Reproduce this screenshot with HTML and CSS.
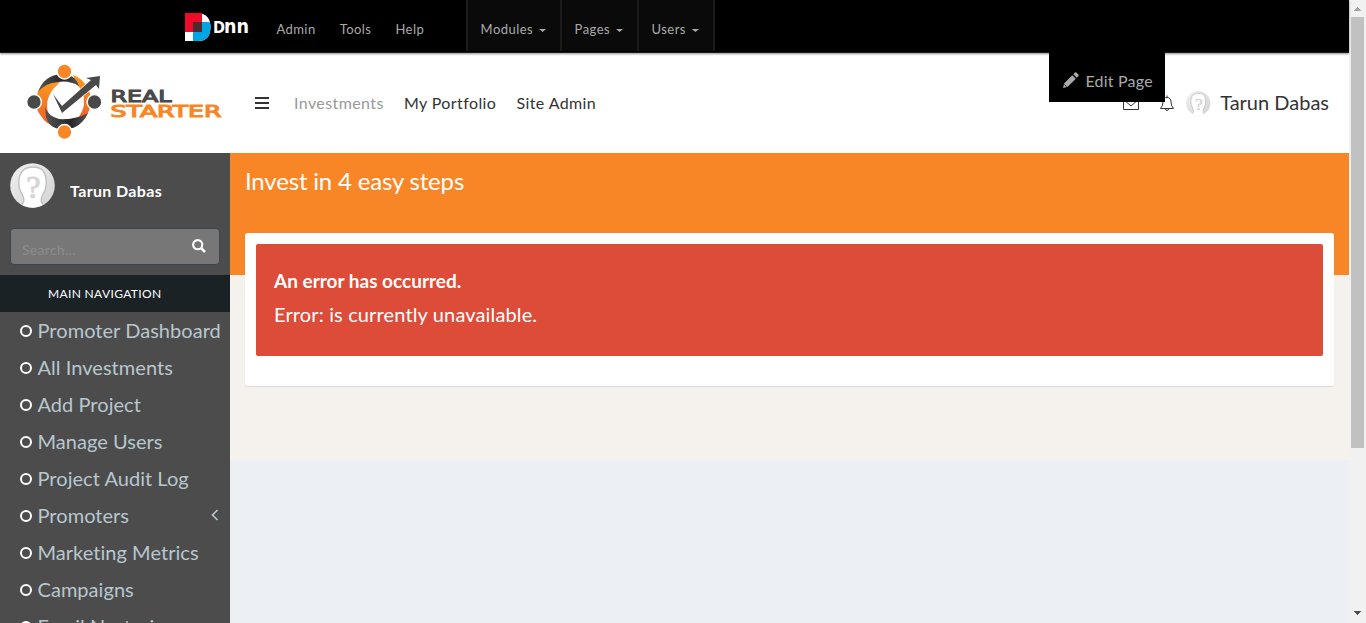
FILE: index.html
```html
<!DOCTYPE html>
<html lang="en">
<head>
<meta charset="utf-8">
<title>Real Starter</title>
<link rel="stylesheet" href="styles.css">
</head>
<body>
<svg class="defs" width="0" height="0">
  <defs>
    <linearGradient id="skin" x1="0" y1="0" x2="1" y2="1"><stop offset="0" stop-color="#f0f0f0"/><stop offset="1" stop-color="#d2d2d2"/></linearGradient>
    <symbol id="avatar" viewBox="0 0 46 46">
      <clipPath id="disc"><circle cx="22.500" cy="22.500" r="22.300"/></clipPath>
      <g clip-path="url(#disc)">
        <rect width="46" height="46" fill="url(#skin)"/>
        <path d="M8 46 13 40Q15 36 12 31Q8 25 9 16Q11 4 23 4Q35 4 36 16Q37 25 33 31Q30 36 32 40L37 46Z" fill="#fff" stroke="#c0c0c0" stroke-width="1.400"/>
        <text x="23.500" y="35" text-anchor="middle" class="avatar-mark">?</text>
      </g>
    </symbol>
  </defs>
</svg>
<div class="window">
  <div class="page">
    <div class="control-bar">
      <svg class="dnn-logo" width="64" height="28" viewBox="0 0 64 28">
        <path d="M0 0H13Q25.500 1 25.500 14Q25.500 28 13 28H0Z" fill="#fff"/>
        <path d="M0 0H17V19H0Z" fill="#ef0a2a"/>
        <path d="M8 9H24.500Q25.500 11 25.500 14Q25.500 28 13 28H8Z" fill="#00a4e4"/>
        <path d="M8 9H17V19H8Z" fill="#4b2b30"/>
        <text x="28" y="20" textLength="12" lengthAdjust="spacingAndGlyphs" class="dnn-word">D</text>
        <text x="39" y="20" textLength="25" lengthAdjust="spacingAndGlyphs" class="dnn-word dnn-small">nn</text>
      </svg>
      <nav class="admin-links"><a>Admin</a><a>Tools</a><a>Help</a></nav>
      <nav class="edit-links">
        <a class="modules">Modules<i class="caret"></i></a><a class="pages">Pages<i class="caret"></i></a><a class="users">Users<i class="caret"></i></a>
      </nav>
    </div>
    <header class="header">
      <svg class="brand" width="196" height="78" viewBox="0 0 196 78">
        <defs>
          <linearGradient id="flame" x1="0" y1="0" x2="0" y2="1"><stop offset="0" stop-color="#fb9a1e"/><stop offset="1" stop-color="#f15a29"/></linearGradient>
          <linearGradient id="coal"><stop offset="0" stop-color="#555"/><stop offset=".6" stop-color="#262626"/><stop offset="1" stop-color="#555"/></linearGradient>
        </defs>
        <path d="M13 27Q5 40 15 53Q20 62 32 64Q22 56 21 44Q20 32 34 19Q20 17 13 27Z" fill="url(#flame)"/>
        <path d="M47 12Q57 15 63 27Q68 41 60 54Q54 62 45 62Q56 53 58 42Q59 28 50 21Z" fill="url(#flame)"/>
        <path d="M12 29Q18 12 36 11Q49 11 53 23Q43 17 32 19Q19 20 12 29Z" fill="url(#coal)"/>
        <path d="M19 44Q22 53 33 56Q49 57 62 50Q55 65 41 66Q24 68 20 54Z" fill="url(#coal)"/>
        <path d="M28 25Q36 19 49 23L57 32Q59 45 50 54Q39 58 29 53Q16 40 28 25Z" fill="#fff"/>
        <path d="M27 31 36 43 65 17 60 15 74 13 73 26 70 22 36 50Z" fill="#4a494a" stroke="#fff" stroke-width="1.500" paint-order="stroke"/>
        <g stroke="#fff" stroke-width="1.500"><circle cx="38.500" cy="8.500" r="7.400" fill="#f88626"/><circle cx="38.500" cy="69" r="7.400" fill="#f88626"/><circle cx="8" cy="39" r="7.400" fill="#4a494a"/><circle cx="68.500" cy="39" r="7.400" fill="#4a494a"/></g>
        <text x="84.500" y="38.500" textLength="61" lengthAdjust="spacingAndGlyphs" class="brand-word">REAL</text>
        <text x="84.500" y="53.500" textLength="111" lengthAdjust="spacingAndGlyphs" class="brand-word brand-accent">STARTER</text>
      </svg>
      <svg class="burger" width="14" height="12" viewBox="0 0 14 12"><path d="M0 1H14M0 6H14M0 11H14" stroke="#333" stroke-width="2"/></svg>
      <nav class="main-links"><a class="muted">Investments</a><a>My Portfolio</a><a>Site Admin</a></nav>
      <div class="account">
        <svg class="mail" width="16" height="13" viewBox="0 0 16 13"><path d="M.5 .5H15.500V12.500H.5ZM.5 2.500 8 9 15.500 2.500" fill="none" stroke="#333"/></svg>
        <svg class="bell" width="16" height="16" viewBox="0 0 16 16"><path d="M1.500 13.500H14.500Q12 11 12 7Q12 2.500 8 2.500Q4 2.500 4 7Q4 11 1.500 13.500ZM8 2.500V.5M6.300 13.500Q6.500 15.500 8 15.500Q9.500 15.500 9.700 13.500" fill="none" stroke="#333"/></svg>
        <svg class="face" width="25" height="25"><use href="#avatar"/></svg>
        <span class="account-name">Tarun Dabas</span>
      </div>
      <div class="edit-page">
        <svg width="16" height="16" viewBox="0 0 16 16"><path d="M0 16 1.200 11.300 9.300 3.200 12.800 6.700 4.700 14.800ZM10.300 2.200 12 .5Q12.700 0 13.400.6L15.400 2.600Q16 3.300 15.500 4L13.800 5.700Z" fill="#aaa"/><path d="M1.500 12.500 3.500 14.500" stroke="#000"/></svg>
        <span>Edit Page</span>
      </div>
    </header>
    <div class="content">
      <aside class="sidebar">
        <div class="profile"><svg width="46" height="46"><use href="#avatar"/></svg><strong>Tarun Dabas</strong></div>
        <div class="search"><span>Search...</span>
          <svg width="14" height="14" viewBox="0 0 14 14"><circle cx="5.700" cy="5.700" r="4.600" fill="none" stroke="#fff" stroke-width="2.100"/><path d="M9 9 13 13" stroke="#fff" stroke-width="2.500"/></svg>
        </div>
        <div class="nav-title">MAIN NAVIGATION</div>
        <ul class="nav">
          <li>Promoter Dashboard</li><li>All Investments</li><li>Add Project</li><li>Manage Users</li><li>Project Audit Log</li>
          <li>Promoters<svg class="angle" width="8" height="12" viewBox="0 0 8 12"><path d="M6.500 1 1.500 6 6.500 11" fill="none" stroke="#b8c7ce" stroke-width="1.600"/></svg></li>
          <li>Marketing Metrics</li><li>Campaigns</li><li>Email Nurturing</li>
        </ul>
      </aside>
      <main class="main">
        <section class="canvas">
          <h1>Invest in 4 easy steps</h1>
          <div class="card"><div class="alert"><strong>An error has occurred.</strong><p>Error: is currently unavailable.</p></div></div>
        </section>
      </main>
    </div>
  </div>
  <div class="scrollbar">
    <svg width="7" height="4" viewBox="0 0 7 4" shape-rendering="crispEdges"><path d="M3 0H4V1H5V2H6V3H7V4H0V3H1V2H2V1H3Z" fill="#a3a3a3"/></svg>
    <div class="thumb"></div>
    <svg class="down" width="7" height="4" viewBox="0 0 7 4" shape-rendering="crispEdges"><path d="M0 0H7V1H6V2H5V3H4V4H3V3H2V2H1V1H0Z" fill="#505050"/></svg>
  </div>
</div>
</body>
</html>
```
FILE: styles.css
```css
*, *::before { box-sizing: border-box; }
body { margin: 0; overflow: hidden; font-family: Lato, sans-serif; font-variant-ligatures: none; }
.defs { display: block; }
.window { display: flex; width: 1366px; height: 623px; overflow: hidden; }
.page { width: 1349px; display: flex; flex-direction: column; }
svg { flex: none; display: block; }

.control-bar { position: relative; z-index: 1; flex: none; height: 53px; display: flex; align-items: flex-start; background: #000; border-bottom: 1px solid #221a1a; box-shadow: 0 1px 2px rgba(0,0,0,.45); color: #aaa; font-size: 13px; letter-spacing: .45px; line-height: 18px; padding-left: 185px; }
.dnn-logo { margin-top: 13px; }
.dnn-word { font: bold 15px "DejaVu Sans", sans-serif; fill: #fff; letter-spacing: 0; }
.dnn-small { font-size: 19px; }
.admin-links { display: flex; gap: 24px; padding: 20px 0 0 27.4px; width: 217px; }
.edit-links { display: flex; height: 51px; background: #0a0a0a; border-right: 2px solid #1b1b1b; }
.edit-links a { display: flex; padding: 20px 0 0 12.6px; border-left: 2px solid #1b1b1b; }
.modules { width: 94px; }
.pages { width: 77px; }
.users { width: 76px; }
.caret { width: 7px; height: 3px; margin: 9px 0 0 6px; background: #aaa; clip-path: polygon(0 0, 100% 0, 50% 100%); }

.header { position: relative; flex: none; height: 100px; display: flex; align-items: flex-start; background: #fff; color: #333; padding-left: 26px; }
.brand { margin-top: 10px; }
.brand-word { font: 16.5px "DejaVu Sans", sans-serif; fill: #4a494a; stroke: #4a494a; stroke-width: 1.1px; }
.brand-accent { fill: #f88626; stroke: #f88626; }
.burger { margin: 44px 0 0 33px; }
.main-links { display: flex; gap: 20.2px; margin: 40px 0 0 25px; font-size: 16px; line-height: 20px; letter-spacing: .4px; }
.muted { color: #999; }
.account { display: flex; align-items: flex-start; margin: 38px 20px 0 auto; }
.mail { margin: 6px 20px 0 0; }
.bell { margin: 4px 11px 0 0; }
.face { margin: 0 9px 0 0; }
.account-name { margin-top: -1px; font-size: 20px; line-height: 24px; }
.avatar-mark { font: 32px "Liberation Serif", serif; fill: #d6d6d6; stroke: #d6d6d6; }
.edit-page { position: absolute; z-index: 2; left: 1049px; top: -3px; width: 116px; height: 52px; background: #000; color: #aaa; display: flex; align-items: flex-start; gap: 6.5px; padding: 21px 0 0 14px; font-size: 16px; line-height: 20px; letter-spacing: .2px; }
.edit-page svg { margin-top: 1px; }

.content { flex: 1; display: flex; min-height: 0; }
.sidebar { width: 230px; flex: none; background: #4c4c4c; overflow: hidden; }
.profile { display: flex; align-items: flex-start; gap: 14px; padding: 10px 0 0 10px; height: 75px; color: #fff; font-size: 16px; line-height: 20px; letter-spacing: .35px; }
.profile strong { margin-top: 18px; }
.search { display: flex; justify-content: space-between; width: 210px; height: 37px; margin-left: 10px; border: 1px solid #374850; border-radius: 4px; background: #777; color: #8c8c8c; padding: 10px 13px 0 11px; font-size: 14px; line-height: 22px; letter-spacing: .3px; }
.nav-title { margin-top: 10px; height: 37px; background: #1a2226; color: #fff; padding-left: 48px; font-size: 12px; line-height: 38px; letter-spacing: .35px; }
.nav { list-style: none; margin: 0; padding: 0; color: #b8c7ce; font-size: 20px; line-height: 37px; letter-spacing: .04px; }
.nav li { display: flex; align-items: center; height: 37px; padding-left: 20px; white-space: nowrap; }
.nav li::before { content: ""; flex: none; width: 12px; height: 12px; border: 2px solid #fff; border-radius: 50%; margin: 0 5.5px 0 0; }
.angle { margin: -2px 11px 0 auto; }

.main { flex: 1; background: #ecf0f5; }
.canvas { height: 307px; background: linear-gradient(#f88626 122px, #f5f2ed 122px); padding: 14px 15px 0; }
.canvas h1 { margin: 0; height: 66px; color: #fff; font-size: 24px; line-height: 27px; font-weight: 400; letter-spacing: -.18px; }
.card { height: 153px; padding: 11px; background: #fff; border-radius: 3px; box-shadow: 0 1px 1px rgba(0,0,0,.1); }
.alert { height: 112px; background: #dd4b39; border-radius: 2px; color: #fff; padding: 25px 18px 0; font-size: 19px; line-height: 24px; }
.alert strong { display: block; }
.alert p { margin: 9px 0 0; font-size: 20px; letter-spacing: .14px; }

.scrollbar { width: 17px; background: #f1f1f1; display: flex; flex-direction: column; align-items: center; padding: 7px 1px 8px 0; }
.thumb { width: 13px; height: 431px; margin-top: 6px; background: #c1c1c1; }
.down { margin-top: auto; }
```
